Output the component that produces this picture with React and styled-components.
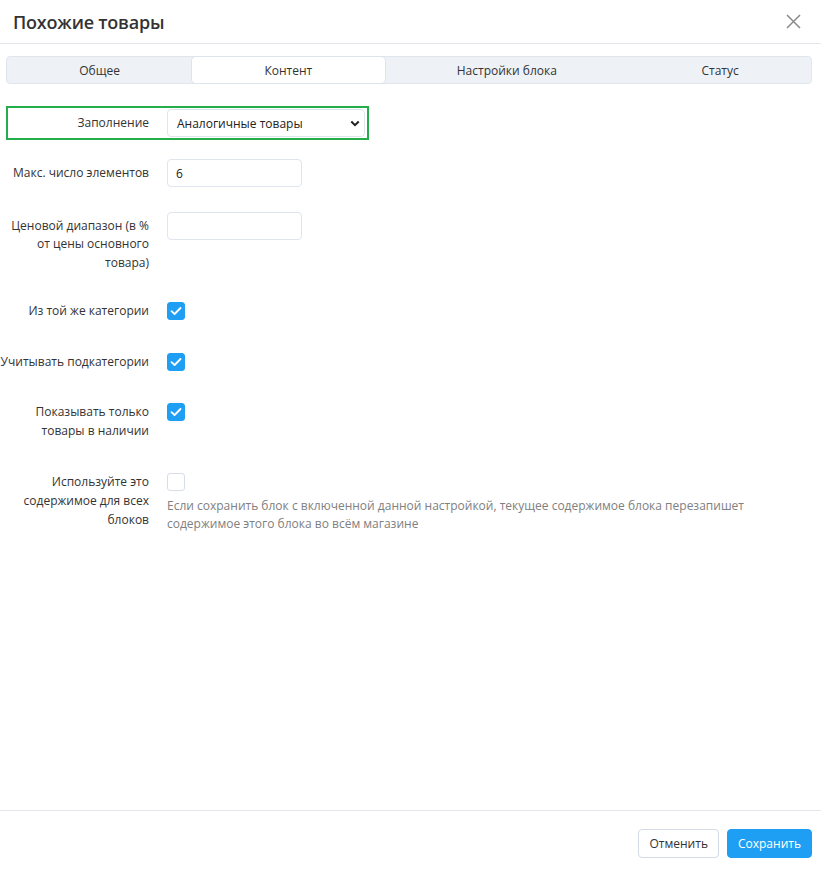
import React from "react"
import styled, { createGlobalStyle } from "styled-components"

const GlobalStyle = createGlobalStyle`
  html, body {
    margin: 0;
    padding: 0;
    background: #fff;
  }
  body {
    font-family: "Open Sans", "Noto Sans", sans-serif;
    font-size: 12px;
    color: #333;
  }
`

const tabs = ["Общее", "Контент", "Настройки блока", "Статус"]

const CheckIcon = () => (
  <svg width="12" height="10" viewBox="0 0 12 10" fill="none">
    <path d="M1.5 5.2 L4.6 8 L10.5 2" stroke="#fff" strokeWidth="1.8" strokeLinecap="round" strokeLinejoin="round" />
  </svg>
)

const CloseIcon = () => (
  <svg width="15" height="15" viewBox="0 0 15 15">
    <path d="M1 1 L14 14 M14 1 L1 14" stroke="#8a8a8a" strokeWidth="1.5" />
  </svg>
)

const ChevronIcon = () => (
  <svg width="10" height="7" viewBox="0 0 10 7" fill="none">
    <path d="M1.3 1.5 L5 5.2 L8.7 1.5" stroke="#222" strokeWidth="2" />
  </svg>
)

const Checkbox = ({ checked }) => (
  <Box $checked={checked}>{checked && <CheckIcon />}</Box>
)

const App = () => {
  return (
    <Modal>
      <GlobalStyle />
      <Header>
        <Title>Похожие товары</Title>
        <CloseButton><CloseIcon /></CloseButton>
      </Header>

      <TabBar>
        {tabs.map((tab) => (
          <Tab key={tab} $active={tab === "Контент"}>{tab}</Tab>
        ))}
      </TabBar>

      <Form>
        <Row $highlight>
          <Label>Заполнение</Label>
          <Select>
            <span>Аналогичные товары</span>
            <ChevronIcon />
          </Select>
        </Row>

        <Row>
          <Label>Макс. число элементов</Label>
          <Input>6</Input>
        </Row>

        <Row>
          <Label>Ценовой диапазон (в % от цены основного товара)</Label>
          <Input />
        </Row>

        <Row>
          <Label $check>Из той же категории</Label>
          <Control><Checkbox checked /></Control>
        </Row>

        <Row>
          <Label $check>Учитывать подкатегории</Label>
          <Control><Checkbox checked /></Control>
        </Row>

        <Row>
          <Label $check>Показывать только товары в наличии</Label>
          <Control><Checkbox checked /></Control>
        </Row>

        <Row>
          <Label $check>Используйте это содержимое для всех блоков</Label>
          <Control>
            <Checkbox />
            <Help>
              Если сохранить блок с включенной данной настройкой, текущее содержимое блока перезапишет
              содержимое этого блока во всём магазине
            </Help>
          </Control>
        </Row>
      </Form>

      <Footer>
        <Button>Отменить</Button>
        <Button $primary>Сохранить</Button>
      </Footer>
    </Modal>
  )
}

const Modal = styled.div`
  width: 821px;
  height: 869px;
  display: flex;
  flex-direction: column;
  background: #fff;
`

const Header = styled.header`
  height: 43px;
  flex: none;
  display: flex;
  align-items: center;
  justify-content: space-between;
  padding: 0 20px 0 13px;
  border-bottom: 1px solid #e3e6ea;
`

const Title = styled.h1`
  margin: 0;
  font-size: 18px;
  font-weight: 600;
  letter-spacing: -0.2px;
  color: #333;
`

const CloseButton = styled.button`
  width: 16px;
  height: 16px;
  padding: 0;
  border: 0;
  background: transparent;
  display: flex;
  align-items: center;
  justify-content: center;
  cursor: pointer;
`

const TabBar = styled.nav`
  margin: 12px 9px 0 6px;
  height: 28px;
  box-sizing: border-box;
  display: flex;
  background: #eef2f7;
  border: 1px solid #e0e6ee;
  border-radius: 4px;
`

const Tab = styled.div`
  flex: 1 1 auto;
  display: flex;
  align-items: center;
  justify-content: center;
  color: #333;
  border-radius: 4px;
  background: ${(p) => (p.$active ? "#fff" : "transparent")};
  box-shadow: ${(p) => (p.$active ? "0 0 0 1px #dde4ee" : "none")};
`

const Form = styled.div`
  flex: 1;
  padding-top: 24px;
  display: flex;
  flex-direction: column;
  align-items: flex-start;
`

const Row = styled.div`
  display: grid;
  grid-template-columns: ${(p) => (p.$highlight ? "141px 198px" : "149px 1fr")};
  column-gap: 18px;
  align-items: start;
  margin: ${(p) => (p.$highlight ? "0 0 21px 8px" : "0 0 25px 0")};
  padding: ${(p) => (p.$highlight ? "1px 2px 1px 0" : "0")};
  outline: ${(p) => (p.$highlight ? "2px solid #25ad4a" : "none")};
`

const Label = styled.label`
  text-align: right;
  line-height: ${(p) => (p.$check ? "19px" : "18.3px")};
  padding: ${(p) => (p.$check ? "0 0 6.5px" : "5px 0 4.5px")};
  color: #333;
`

const fieldBase = `
  box-sizing: border-box;
  height: 28px;
  border: 1px solid #dfe5ee;
  border-radius: 4px;
  background: #fff;
  color: #222;
  display: flex;
  align-items: center;
`

const Select = styled.div`
  ${fieldBase}
  width: 198px;
  padding: 0 4px 0 9px;
  justify-content: space-between;
`

const Input = styled.div`
  ${fieldBase}
  width: 135px;
  padding: 0 8px;
`

const Control = styled.div`
  display: flex;
  flex-direction: column;
  align-items: flex-start;
  padding-top: 1px;
`

const Box = styled.span`
  box-sizing: border-box;
  width: 18px;
  height: 18px;
  border-radius: 3px;
  display: flex;
  align-items: center;
  justify-content: center;
  background: ${(p) => (p.$checked ? "#1f9ff3" : "#fff")};
  border: 1px solid ${(p) => (p.$checked ? "#1f9ff3" : "#d8dee8")};
`

const Help = styled.p`
  margin: 6px 0 0;
  width: 600px;
  line-height: 18px;
  color: #808080;
`

const Footer = styled.footer`
  flex: none;
  height: 59px;
  border-top: 1px solid #e3e6ea;
  display: flex;
  justify-content: flex-end;
  align-items: flex-start;
  gap: 8px;
  padding: 18px 9px 0 0;
  box-sizing: border-box;
`

const Button = styled.button`
  height: 29px;
  padding: 0 10px;
  border-radius: 4px;
  font-family: inherit;
  font-size: 12px;
  cursor: pointer;
  color: ${(p) => (p.$primary ? "#fff" : "#333")};
  background: ${(p) => (p.$primary ? "#1f9ff3" : "#fff")};
  border: 1px solid ${(p) => (p.$primary ? "#1f9ff3" : "#d3dbe6")};
`

export default App
